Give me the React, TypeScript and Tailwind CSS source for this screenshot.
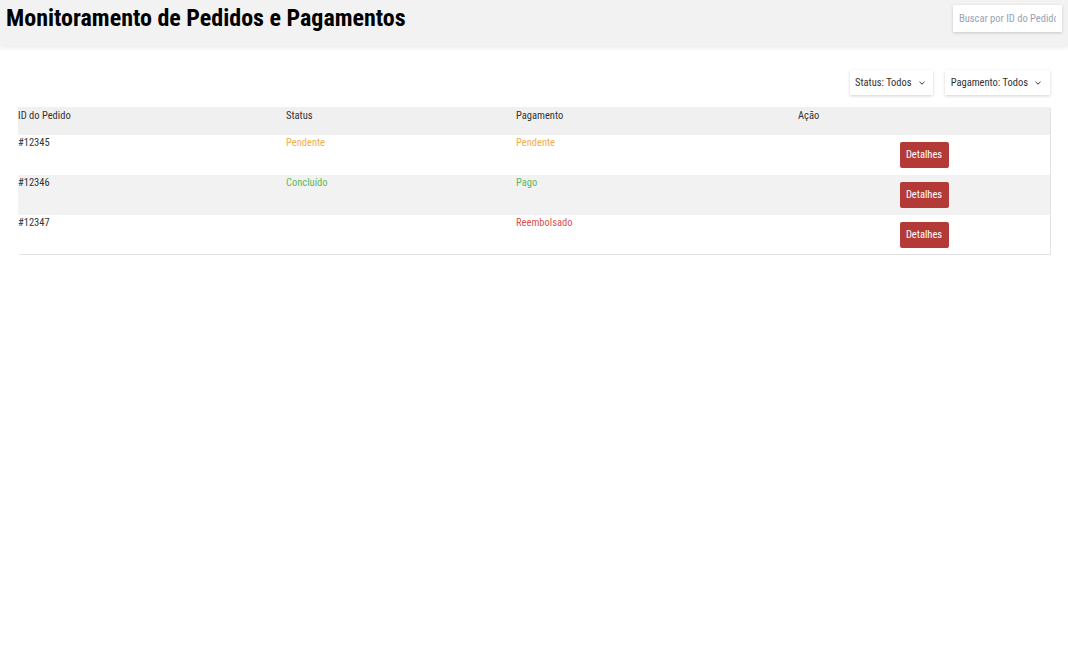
const rows = [
  { id: '#12345', status: 'Pendente', statusColor: 'text-[#f0ad4e]', pay: 'Pendente', payColor: 'text-[#f0ad4e]', bg: 'bg-white' },
  { id: '#12346', status: 'Concluído', statusColor: 'text-[#5cb85c]', pay: 'Pago', payColor: 'text-[#5cb85c]', bg: 'bg-[#f2f2f2]' },
  { id: '#12347', status: '', statusColor: '', pay: 'Reembolsado', payColor: 'text-[#d9534f]', bg: 'bg-white' },
];

function Chevron() {
  return (
    <svg width="6" height="4" viewBox="0 0 6 4" className="ml-[7px]">
      <path d="M0.5 0.8 L3 3.2 L5.5 0.8" fill="none" stroke="#333" strokeWidth="1" />
    </svg>
  );
}

export default function App() {
  return (
    <div className="min-h-[649px] bg-white font-['Roboto_Condensed','Roboto',sans-serif] text-[#333]">
      <header className="flex h-[46px] items-start justify-between bg-[#f2f2f2] pl-[6px] pr-[6px] pt-[5px] shadow-[0_2px_4px_rgba(0,0,0,0.08)]">
        <h1 className="text-[24px] font-bold leading-[26px] text-black">Monitoramento de Pedidos e Pagamentos</h1>
        <input
          type="text"
          placeholder="Buscar por ID do Pedido"
          className="h-[27px] w-[109px] bg-white px-[6px] text-[10.5px] text-[#333] shadow-[0_1px_3px_rgba(0,0,0,0.18)] outline-none placeholder:text-[#99a2b4]"
        />
      </header>

      <main className="px-[18px] pt-[24px]">
        <div className="flex justify-end gap-[12px]">
          <button className="flex h-[25px] items-center bg-white pl-[5px] pr-[8px] text-[10.5px] text-[#333] shadow-[0_1px_3px_rgba(0,0,0,0.18)]">
            Status: Todos
            <Chevron />
          </button>
          <button className="flex h-[25px] items-center bg-white pl-[6px] pr-[9px] text-[10.5px] text-[#333] shadow-[0_1px_3px_rgba(0,0,0,0.18)]">
            Pagamento: Todos
            <Chevron />
          </button>
        </div>

        <div className="mt-[12px] shadow-[1px_1px_0_#e3e3e3] text-[10.5px]">
          <div className="grid h-[28px] grid-cols-[268px_230px_282px_1fr] bg-[#f0f0f0] pt-[2px] leading-[14px] text-[#333]">
            <div>ID do Pedido</div>
            <div>Status</div>
            <div>Pagamento</div>
            <div>Ação</div>
          </div>
          {rows.map((r, i) => (
            <div key={r.id} className={`grid grid-cols-[268px_230px_282px_1fr] leading-[14px] ${i === 2 ? 'h-[39px]' : 'h-[40px]'} ${r.bg}`}>
              <div className="pt-[1px] text-[#333]">{r.id}</div>
              <div className={`pt-[1px] ${r.statusColor}`}>{r.status}</div>
              <div className={`pt-[1px] ${r.payColor}`}>{r.pay}</div>
              <div className="flex justify-center pt-[7px]">
                <button className="h-[26px] w-[49px] rounded-[2px] bg-[#b43a38] text-[10.5px] text-white">Detalhes</button>
              </div>
            </div>
          ))}
        </div>
      </main>
    </div>
  );
}
